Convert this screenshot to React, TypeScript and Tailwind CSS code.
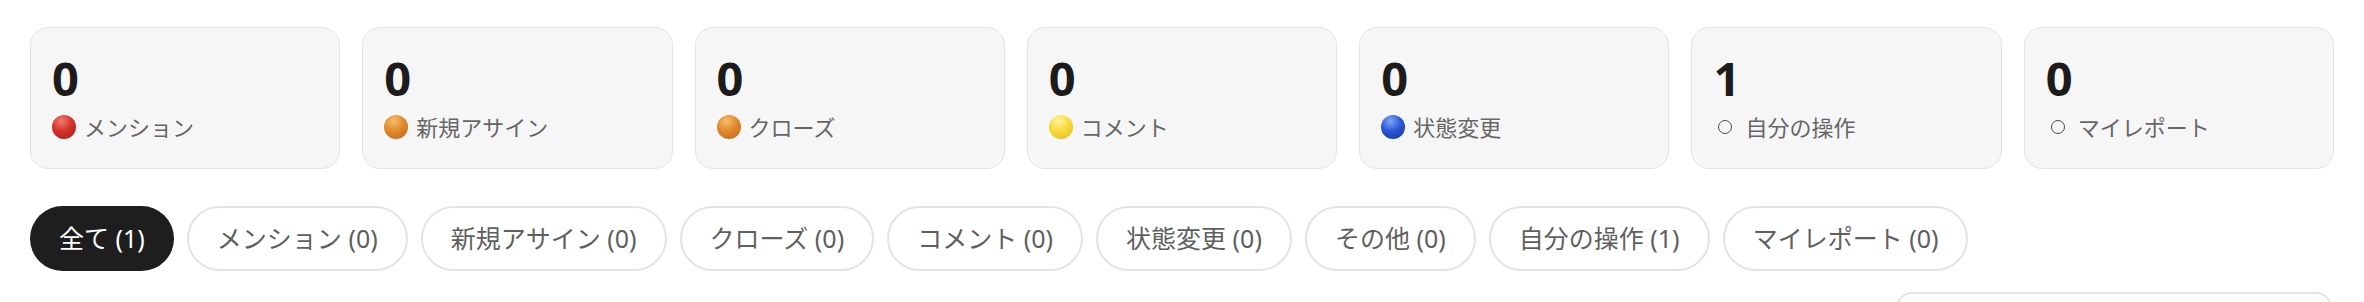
import React from "react"

type Stat = {
  count: number
  label: string
  dot: "red" | "orange" | "yellow" | "blue" | "none"
}

const stats: Stat[] = [
  { count: 0, label: "メンション", dot: "red" },
  { count: 0, label: "新規アサイン", dot: "orange" },
  { count: 0, label: "クローズ", dot: "orange" },
  { count: 0, label: "コメント", dot: "yellow" },
  { count: 0, label: "状態変更", dot: "blue" },
  { count: 1, label: "自分の操作", dot: "none" },
  { count: 0, label: "マイレポート", dot: "none" },
]

const tabs = [
  { label: "全て", count: 1 },
  { label: "メンション", count: 0 },
  { label: "新規アサイン", count: 0 },
  { label: "クローズ", count: 0 },
  { label: "コメント", count: 0 },
  { label: "状態変更", count: 0 },
  { label: "その他", count: 0 },
  { label: "自分の操作", count: 1 },
  { label: "マイレポート", count: 0 },
]

const Dot = ({ kind }: { kind: Stat["dot"] }) => {
  if (kind === "none") {
    return (
      <span className="flex w-[24px] h-[24px] items-center justify-center">
        <span className="block w-[14px] h-[14px] rounded-full border-[1.5px] border-[#4a4a4a]" />
      </span>
    )
  }
  const color = {
    red: "bg-[radial-gradient(circle_at_40%_25%,#f47a6e_0%,#d3322a_45%,#a81c16_100%)]",
    orange: "bg-[radial-gradient(circle_at_40%_25%,#f6bd6a_0%,#df8a2c_45%,#bd6217_100%)]",
    yellow: "bg-[radial-gradient(circle_at_40%_25%,#fff3a0_0%,#f8d93e_45%,#e5b814_100%)]",
    blue: "bg-[radial-gradient(circle_at_40%_25%,#7ea6f5_0%,#2a58d6_45%,#0f2f9e_100%)]",
  }[kind]
  return <span className={`block w-[24px] h-[24px] rounded-full ${color}`} />
}

const StatCard = ({ stat }: { stat: Stat }) => (
  <div className="rounded-[18px] border-[1.5px] border-[#e4e4e4] bg-[#f6f6f6] px-[21px] pt-[22px] pb-[26px]">
    <div className="text-[47px] leading-[56px] font-bold text-[#1c1c1c]">{stat.count}</div>
    <div className="mt-[6px] flex items-center gap-[8px] text-[22px] leading-[30px] text-[#666666]">
      <Dot kind={stat.dot} />
      <span>{stat.label}</span>
    </div>
  </div>
)

export default function App() {
  return (
    <div
      className="min-h-screen bg-white px-[30px] pt-[27px] overflow-hidden"
      style={{ fontFamily: '"Noto Sans", "Noto Sans CJK JP", sans-serif' }}
    >
      <div className="grid grid-cols-7 gap-[22px]">
        {stats.map((s) => (
          <StatCard key={s.label} stat={s} />
        ))}
      </div>

      <div className="mt-[37px] flex flex-row items-center gap-[13px]">
        {tabs.map((t, i) => (
          <button
            key={t.label}
            className={
              i === 0
                ? "h-[65px] rounded-full bg-[#1e1e1e] px-[29px] text-[25px] text-white"
                : "h-[65px] rounded-full border-[2px] border-[#e4e4e4] bg-white px-[28px] text-[25px] text-[#5f5f5f]"
            }
          >
            {t.label} ({t.count})
          </button>
        ))}
      </div>

      <div className="mt-[21px] flex justify-end pr-[2px]">
        <div className="h-[60px] w-[436px] rounded-[16px] border-[2px] border-[#e4e4e4] bg-white" />
      </div>
    </div>
  )
}
